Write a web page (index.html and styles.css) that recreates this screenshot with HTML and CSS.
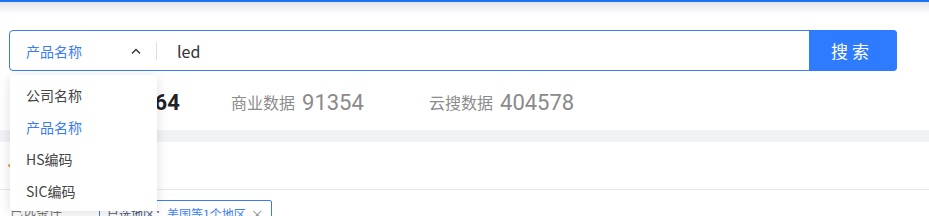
FILE: index.html
```html
<!DOCTYPE html>
<html>
  <head>
    <title>搜索</title>
    <link rel="stylesheet" href="styles.css">
  </head>
  <body>
    <div class="topbar"></div>
    <div class="header-shade"></div>

    <div class="search-area">
      <div class="search-box">
        <div class="type-select">
          <span class="type-label">产品名称</span>
          <svg class="chevron" width="10" height="6" viewBox="0 0 10 6">
            <polyline points="1,5.5 5,1.5 9,5.5" fill="none" stroke="#333" stroke-width="1.4" />
          </svg>
        </div>
        <input class="keyword" type="text" value="led" />
        <button class="search-btn" type="button">搜索</button>

        <ul class="type-menu">
          <li>公司名称</li>
          <li class="active">产品名称</li>
          <li>HS编码</li>
          <li>SIC编码</li>
        </ul>
      </div>

      <div class="stats">
        <div class="stat">
          <span class="stat-label">全部数据</span>
          <span class="stat-num main">495964</span>
        </div>
        <div class="stat">
          <span class="stat-label">商业数据</span>
          <span class="stat-num">91354</span>
        </div>
        <div class="stat">
          <span class="stat-label">云搜数据</span>
          <span class="stat-num">404578</span>
        </div>
      </div>
    </div>

    <div class="band"></div>

    <div class="section">
      <div class="section-title">
        <span class="title-mark"></span>
        筛选条件
      </div>
      <div class="filter-row">
        <span class="filter-label">已选条件</span>
        <span class="tag">
          已选地区：<em>美国等1个地区</em>
          <span class="tag-close">×</span>
        </span>
      </div>
    </div>
  </body>
</html>
```

FILE: styles.css
```css
body {
  margin: 0;
  font-family: "Noto Sans CJK SC", "Noto Sans", sans-serif;
  background-color: #ffffff;
  color: #333;
  overflow: hidden;
  height: 216px;
}

.topbar {
  height: 2px;
  background-color: #1a73f0;
}

.header-shade {
  height: 12px;
  background: linear-gradient(#e1e3ea, #ffffff);
}

.search-area {
  padding: 16px 9px 0;
}

.search-box {
  position: relative;
  display: flex;
  width: 888px;
  height: 41px;
  box-sizing: border-box;
  border: 1px solid #3a7cf6;
  border-radius: 4px;
}

.type-select {
  display: flex;
  align-items: center;
  width: 147px;
  box-sizing: border-box;
  padding: 0 16px;
  position: relative;
}

.type-select::after {
  content: "";
  position: absolute;
  right: 0;
  top: 11px;
  width: 1px;
  height: 18px;
  background-color: #dedede;
}

.type-label {
  flex: 1;
  font-size: 14px;
  color: #3a7cf6;
}

.chevron {
  margin-left: 1px;
}

.keyword {
  flex: 1;
  border: none;
  outline: none;
  padding: 0 0 0 20px;
  font-family: "Noto Sans CJK SC", "Noto Sans", sans-serif;
  font-size: 16px;
  color: #333;
  background: transparent;
}

.search-btn {
  width: 88px;
  margin: -1px -1px -1px 0;
  border: none;
  border-radius: 0 4px 4px 0;
  background-color: #2f7bff;
  color: #ffffff;
  font-family: "Noto Sans CJK SC", sans-serif;
  font-size: 17px;
  letter-spacing: 4px;
  padding-left: 4px;
  cursor: pointer;
}

.type-menu {
  position: absolute;
  left: 0;
  top: 44px;
  width: 147px;
  margin: 0;
  padding: 4px 0;
  list-style: none;
  background-color: #ffffff;
  border-radius: 4px;
  box-shadow: 0 2px 12px rgba(0, 0, 0, 0.13);
  z-index: 10;
}

.type-menu li {
  height: 32px;
  line-height: 32px;
  padding-left: 16px;
  font-size: 14px;
  color: #444;
}

.type-menu li.active {
  color: #3a7cf6;
}

.stats {
  display: grid;
  grid-template-columns: 198px 198px 198px;
  padding: 3px 0 0 24px;
  height: 59px;
  box-sizing: border-box;
  align-items: center;
}

.stat {
  display: flex;
  align-items: center;
  gap: 7px;
}

.stat-label {
  font-size: 16px;
  color: #8c8c8c;
}

.stat-num {
  font-family: Roboto, "Noto Sans", sans-serif;
  font-size: 22px;
  color: #8a8a8a;
}

.stat-num.main {
  font-weight: 700;
  color: #222;
}

.band {
  height: 12px;
  background-color: #f1f2f6;
}

.section-title {
  display: flex;
  align-items: center;
  height: 47px;
  padding-left: 8px;
  font-size: 15px;
  border-bottom: 1px solid #e8e8e8;
}

.title-mark {
  width: 4px;
  height: 3px;
  border-radius: 2px;
  background-color: #f0a040;
  margin-right: 8px;
}

.filter-row {
  display: flex;
  align-items: flex-start;
  padding: 10px 0 0 10px;
}

.filter-label {
  width: 89px;
  font-size: 13px;
  color: #777;
  line-height: 22px;
}

.tag {
  display: inline-flex;
  align-items: center;
  height: 24px;
  padding: 0 7px;
  border: 1px solid #3a7cf6;
  border-radius: 2px;
  font-size: 12px;
  color: #4a5a7a;
  white-space: nowrap;
}

.tag em {
  font-style: normal;
  color: #3a7cf6;
}

.tag-close {
  margin-left: 5px;
  color: #888;
  font-size: 13px;
}
```
